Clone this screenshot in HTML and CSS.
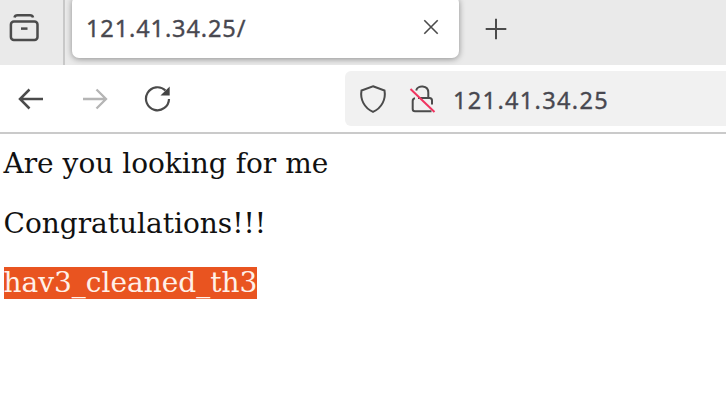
FILE: index.html
```
<!DOCTYPE html>
<html lang="en">
<head>
<meta charset="utf-8">
<title>121.41.34.25/</title>
<link rel="stylesheet" href="styles.css">
</head>
<body>
<header class="tabs">
  <div class="view"><svg width="32" height="32" viewBox="0 0 32 32"><path d="M6.500 5.600Q7 3.300 9.500 3.300H22Q24.500 3.300 25 5.600"/><rect x="2.900" y="9.400" width="26.600" height="18.500" rx="3"/><path d="M13 16.600h6.500"/></svg></div>
  <div class="tab"><span class="tab-title">121.41.34.25/</span><svg class="close" width="16" height="16" viewBox="0 0 16 16"><path d="M1.300 1.300l13.400 13.400M14.700 1.300L1.300 14.700"/></svg></div>
  <svg class="plus" width="22" height="22" viewBox="0 0 22 22"><path d="M11 .7v20.600M.7 11h20.600"/></svg>
</header>
<nav class="toolbar">
  <svg class="back" width="26" height="22" viewBox="0 0 26 22"><path d="M25 11H2M11.500 1.500L2 11l9.500 9.500"/></svg>
  <svg class="forward" width="26" height="22" viewBox="0 0 26 22"><path d="M1 11h23M14.500 1.500L24 11l-9.500 9.500"/></svg>
  <svg class="reload" width="28" height="28" viewBox="0 0 28 28"><path d="M25 14A11.500 11.500 0 1 1 21.500 5.500"/><path class="fill" d="M25.700 1.500v9h-9.200z"/></svg>
  <div class="address">
    <svg class="shield" width="28" height="30" viewBox="0 0 28 30"><path d="M14 2.200L25.500 6.500C27 15 23 24 14 27.800C5 24 1 15 2.500 6.500Z"/></svg>
    <svg class="lock" width="28" height="30" viewBox="0 0 28 30"><path d="M8.200 6.500C9.500 .8 20.300 1 20.300 8.500V14M10 14H21.500Q24 14 24 16.500V20.500M7 14.300Q4.700 14.600 4.700 17V25Q4.700 27.300 7 27.300H23.500"/><path class="slash" d="M2.500 5L26.500 28"/></svg>
    <span class="url">121.41.34.25</span>
  </div>
</nav>
<main>
  <p>Are you looking for me</p>
  <p>Congratulations!!!</p>
  <p><mark>hav3_cleaned_th3</mark></p>
</main>
</body>
</html>
```
FILE: styles.css
```
* { box-sizing: border-box; }
body { margin: 0; background: #fff; overflow: hidden; }
svg { display: block; flex: none; fill: none; stroke: #4b4b4b; stroke-width: 2; }
.tabs { display: flex; height: 65px; background: #eaeaea; overflow: hidden; }
.view { width: 65px; padding: 12px 0 0 8px; border-right: 2px solid #c8c8c8; flex: none; }
.view svg { stroke-width: 2.500; }
.tab { display: flex; align-items: center; justify-content: space-between; width: 387px; height: 62px; margin: -4px 0 0 7px; padding: 0 20px 0 14px; background: #fff; border-radius: 7px; box-shadow: 0 1px 6px rgba(0,0,0,.4); flex: none; }
.tab-title, .url { font-family: "Noto Sans", sans-serif; font-size: 23.500px; line-height: 32px; color: #484850; letter-spacing: .9px; white-space: nowrap; -webkit-text-stroke: .35px #484850; }
.tab-title { padding-top: 2px; }
.close { stroke-width: 1.600; }
.plus { margin: 18px 0 0 26px; }
.toolbar { display: flex; align-items: center; height: 69px; padding-left: 18px; border-bottom: 2px solid #cacaca; }
.back { stroke-width: 2.500; }
.forward { margin-left: 38px; stroke: #b5b5b5; stroke-width: 2.300; }
.reload { margin-left: 36px; stroke-width: 2.200; }
.fill { fill: #444; stroke: none; }
.address { display: flex; align-items: center; height: 55px; flex: 1; margin-left: 173px; padding-left: 14px; background: #f1f1f1; border-radius: 6px 0 0 6px; }
.lock { margin-left: 21px; }
.slash { stroke: #f03560; }
.url { margin-left: 17px; padding-top: 2px; letter-spacing: 1.350px; }
main { padding: 14px 3.500px; }
p { margin: 0 0 27.700px; font: 28px/32px "DejaVu Serif", serif; color: #111; white-space: nowrap; }
mark { display: inline-block; height: 32px; background: #e95420; color: #fff0e8; }
```
